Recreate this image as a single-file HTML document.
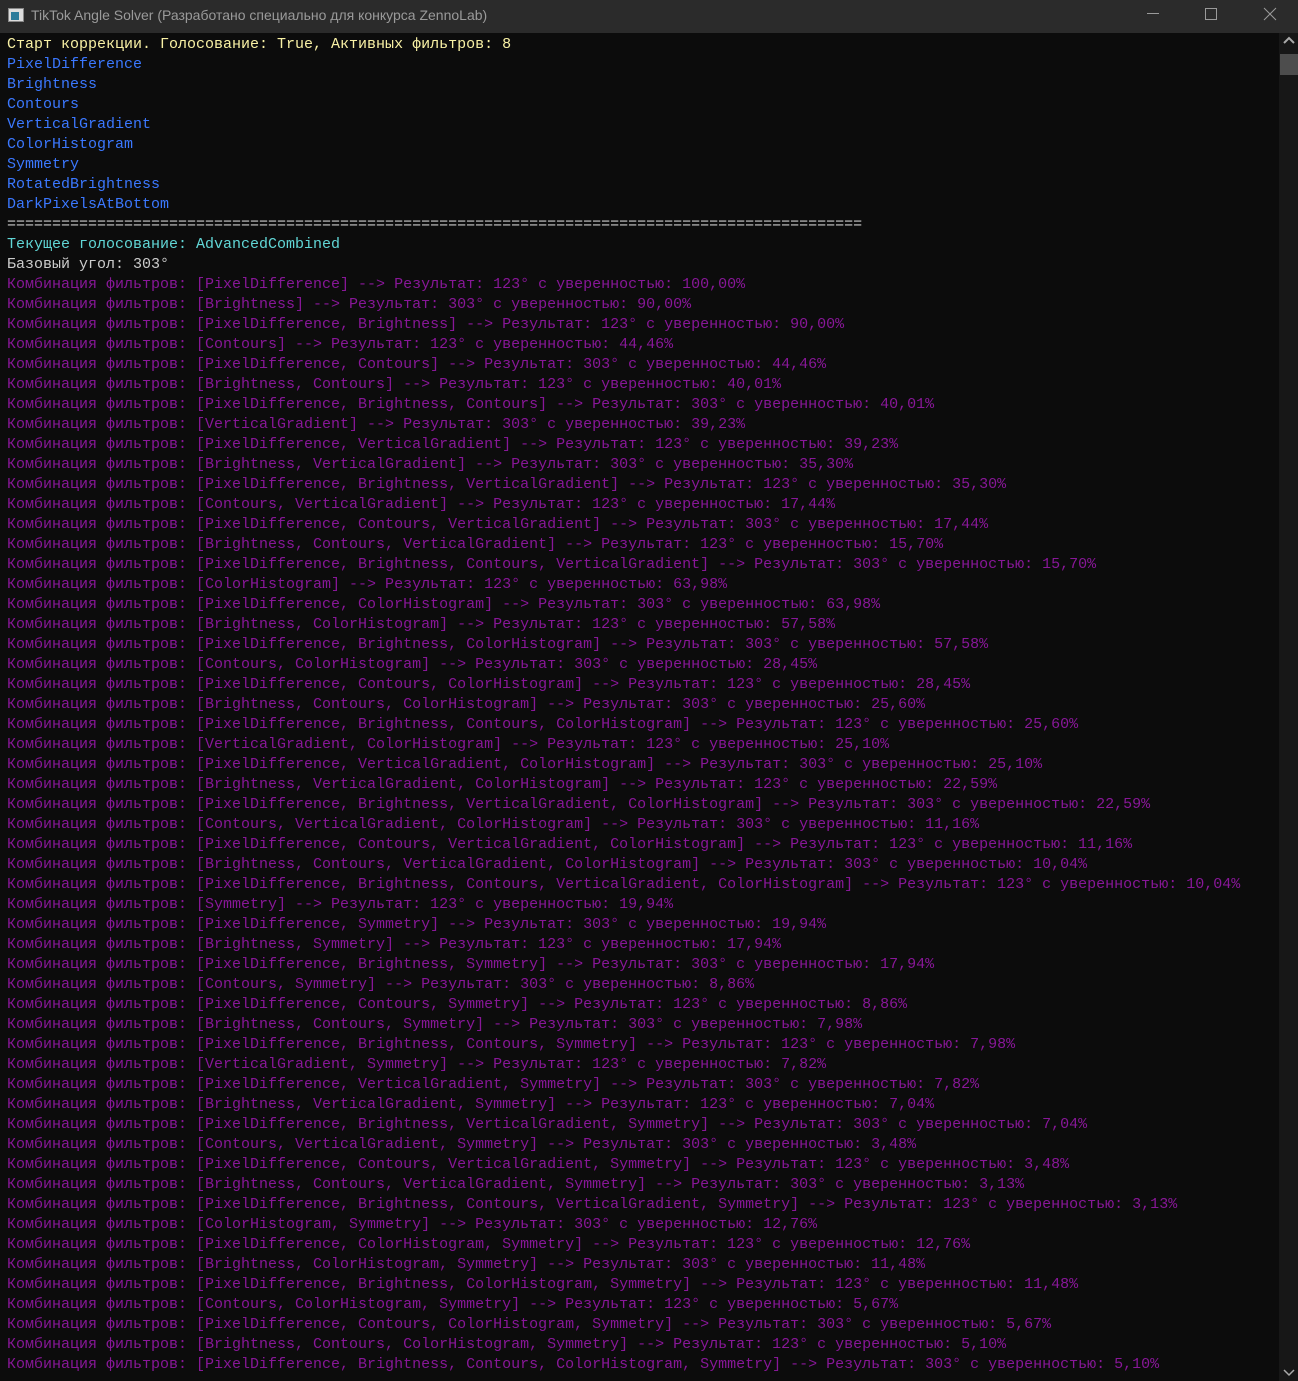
<!DOCTYPE html>
<html><head><meta charset="utf-8"><style>
html,body{margin:0;padding:0;width:1298px;height:1381px;overflow:hidden;background:#0c0c0c}
.tb{position:absolute;left:0;top:0;width:1298px;height:33px;background:#2b2b2b;font-family:"Liberation Sans",sans-serif;font-size:14px;color:#9a9a9a}
.tb .t{position:absolute;left:31px;top:7px}
.ic{position:absolute;left:8px;top:8px;width:16px;height:14px;background:#ddd;border:1px solid #888;box-sizing:border-box}
.ic i{position:absolute;left:2px;top:3px;width:8px;height:8px;background:#2a7a9a}
pre{position:absolute;left:7px;top:35px;margin:0;font-family:"Liberation Mono",monospace;font-size:15px;line-height:20px;color:#cccccc}
.y{color:#f9f1a5}.b{color:#3b78ff}.c{color:#61d6d6}.m{color:#881798}.w{color:#cccccc}
.sb{position:absolute;left:1279px;top:33px;width:19px;height:1348px;background:#171717}
.th{position:absolute;left:1280px;top:54px;width:18px;height:21px;background:#4d4d4d}
</style></head><body>
<div class="tb"><div class="ic"><i></i></div><span class="t">TikTok Angle Solver (Разработано специально для конкурса ZennoLab)</span>
<svg style="position:absolute;left:1140px;top:0" width="158" height="33"><g stroke="#9a9a9a" stroke-width="1" fill="none"><line x1="7" y1="13.5" x2="19" y2="13.5"/><rect x="65.5" y="8.5" width="11" height="11"/><path d="M124 8 L136 20 M136 8 L124 20"/></g></svg></div>
<div class="sb"></div><div class="th"></div>
<svg style="position:absolute;left:1282px;top:36px" width="14" height="10"><path d="M2 7 L7 2 L12 7" stroke="#aaa" stroke-width="2" fill="none"/></svg>
<svg style="position:absolute;left:1282px;top:1367px" width="14" height="10"><path d="M2 3 L7 8 L12 3" stroke="#aaa" stroke-width="1.5" fill="none"/></svg>
<pre><span class="y">Старт коррекции. Голосование: True, Активных фильтров: 8</span>
<span class="b">PixelDifference
Brightness
Contours
VerticalGradient
ColorHistogram
Symmetry
RotatedBrightness
DarkPixelsAtBottom</span>
<span class="w">===============================================================================================</span>
<span class="c">Текущее голосование: AdvancedCombined</span>
<span class="w">Базовый угол: 303°</span>
<span class="m">Комбинация фильтров: [PixelDifference] --> Результат: 123° с уверенностью: 100,00%
Комбинация фильтров: [Brightness] --> Результат: 303° с уверенностью: 90,00%
Комбинация фильтров: [PixelDifference, Brightness] --> Результат: 123° с уверенностью: 90,00%
Комбинация фильтров: [Contours] --> Результат: 123° с уверенностью: 44,46%
Комбинация фильтров: [PixelDifference, Contours] --> Результат: 303° с уверенностью: 44,46%
Комбинация фильтров: [Brightness, Contours] --> Результат: 123° с уверенностью: 40,01%
Комбинация фильтров: [PixelDifference, Brightness, Contours] --> Результат: 303° с уверенностью: 40,01%
Комбинация фильтров: [VerticalGradient] --> Результат: 303° с уверенностью: 39,23%
Комбинация фильтров: [PixelDifference, VerticalGradient] --> Результат: 123° с уверенностью: 39,23%
Комбинация фильтров: [Brightness, VerticalGradient] --> Результат: 303° с уверенностью: 35,30%
Комбинация фильтров: [PixelDifference, Brightness, VerticalGradient] --> Результат: 123° с уверенностью: 35,30%
Комбинация фильтров: [Contours, VerticalGradient] --> Результат: 123° с уверенностью: 17,44%
Комбинация фильтров: [PixelDifference, Contours, VerticalGradient] --> Результат: 303° с уверенностью: 17,44%
Комбинация фильтров: [Brightness, Contours, VerticalGradient] --> Результат: 123° с уверенностью: 15,70%
Комбинация фильтров: [PixelDifference, Brightness, Contours, VerticalGradient] --> Результат: 303° с уверенностью: 15,70%
Комбинация фильтров: [ColorHistogram] --> Результат: 123° с уверенностью: 63,98%
Комбинация фильтров: [PixelDifference, ColorHistogram] --> Результат: 303° с уверенностью: 63,98%
Комбинация фильтров: [Brightness, ColorHistogram] --> Результат: 123° с уверенностью: 57,58%
Комбинация фильтров: [PixelDifference, Brightness, ColorHistogram] --> Результат: 303° с уверенностью: 57,58%
Комбинация фильтров: [Contours, ColorHistogram] --> Результат: 303° с уверенностью: 28,45%
Комбинация фильтров: [PixelDifference, Contours, ColorHistogram] --> Результат: 123° с уверенностью: 28,45%
Комбинация фильтров: [Brightness, Contours, ColorHistogram] --> Результат: 303° с уверенностью: 25,60%
Комбинация фильтров: [PixelDifference, Brightness, Contours, ColorHistogram] --> Результат: 123° с уверенностью: 25,60%
Комбинация фильтров: [VerticalGradient, ColorHistogram] --> Результат: 123° с уверенностью: 25,10%
Комбинация фильтров: [PixelDifference, VerticalGradient, ColorHistogram] --> Результат: 303° с уверенностью: 25,10%
Комбинация фильтров: [Brightness, VerticalGradient, ColorHistogram] --> Результат: 123° с уверенностью: 22,59%
Комбинация фильтров: [PixelDifference, Brightness, VerticalGradient, ColorHistogram] --> Результат: 303° с уверенностью: 22,59%
Комбинация фильтров: [Contours, VerticalGradient, ColorHistogram] --> Результат: 303° с уверенностью: 11,16%
Комбинация фильтров: [PixelDifference, Contours, VerticalGradient, ColorHistogram] --> Результат: 123° с уверенностью: 11,16%
Комбинация фильтров: [Brightness, Contours, VerticalGradient, ColorHistogram] --> Результат: 303° с уверенностью: 10,04%
Комбинация фильтров: [PixelDifference, Brightness, Contours, VerticalGradient, ColorHistogram] --> Результат: 123° с уверенностью: 10,04%
Комбинация фильтров: [Symmetry] --> Результат: 123° с уверенностью: 19,94%
Комбинация фильтров: [PixelDifference, Symmetry] --> Результат: 303° с уверенностью: 19,94%
Комбинация фильтров: [Brightness, Symmetry] --> Результат: 123° с уверенностью: 17,94%
Комбинация фильтров: [PixelDifference, Brightness, Symmetry] --> Результат: 303° с уверенностью: 17,94%
Комбинация фильтров: [Contours, Symmetry] --> Результат: 303° с уверенностью: 8,86%
Комбинация фильтров: [PixelDifference, Contours, Symmetry] --> Результат: 123° с уверенностью: 8,86%
Комбинация фильтров: [Brightness, Contours, Symmetry] --> Результат: 303° с уверенностью: 7,98%
Комбинация фильтров: [PixelDifference, Brightness, Contours, Symmetry] --> Результат: 123° с уверенностью: 7,98%
Комбинация фильтров: [VerticalGradient, Symmetry] --> Результат: 123° с уверенностью: 7,82%
Комбинация фильтров: [PixelDifference, VerticalGradient, Symmetry] --> Результат: 303° с уверенностью: 7,82%
Комбинация фильтров: [Brightness, VerticalGradient, Symmetry] --> Результат: 123° с уверенностью: 7,04%
Комбинация фильтров: [PixelDifference, Brightness, VerticalGradient, Symmetry] --> Результат: 303° с уверенностью: 7,04%
Комбинация фильтров: [Contours, VerticalGradient, Symmetry] --> Результат: 303° с уверенностью: 3,48%
Комбинация фильтров: [PixelDifference, Contours, VerticalGradient, Symmetry] --> Результат: 123° с уверенностью: 3,48%
Комбинация фильтров: [Brightness, Contours, VerticalGradient, Symmetry] --> Результат: 303° с уверенностью: 3,13%
Комбинация фильтров: [PixelDifference, Brightness, Contours, VerticalGradient, Symmetry] --> Результат: 123° с уверенностью: 3,13%
Комбинация фильтров: [ColorHistogram, Symmetry] --> Результат: 303° с уверенностью: 12,76%
Комбинация фильтров: [PixelDifference, ColorHistogram, Symmetry] --> Результат: 123° с уверенностью: 12,76%
Комбинация фильтров: [Brightness, ColorHistogram, Symmetry] --> Результат: 303° с уверенностью: 11,48%
Комбинация фильтров: [PixelDifference, Brightness, ColorHistogram, Symmetry] --> Результат: 123° с уверенностью: 11,48%
Комбинация фильтров: [Contours, ColorHistogram, Symmetry] --> Результат: 123° с уверенностью: 5,67%
Комбинация фильтров: [PixelDifference, Contours, ColorHistogram, Symmetry] --> Результат: 303° с уверенностью: 5,67%
Комбинация фильтров: [Brightness, Contours, ColorHistogram, Symmetry] --> Результат: 123° с уверенностью: 5,10%
Комбинация фильтров: [PixelDifference, Brightness, Contours, ColorHistogram, Symmetry] --> Результат: 303° с уверенностью: 5,10%</span></pre>
</body></html>
